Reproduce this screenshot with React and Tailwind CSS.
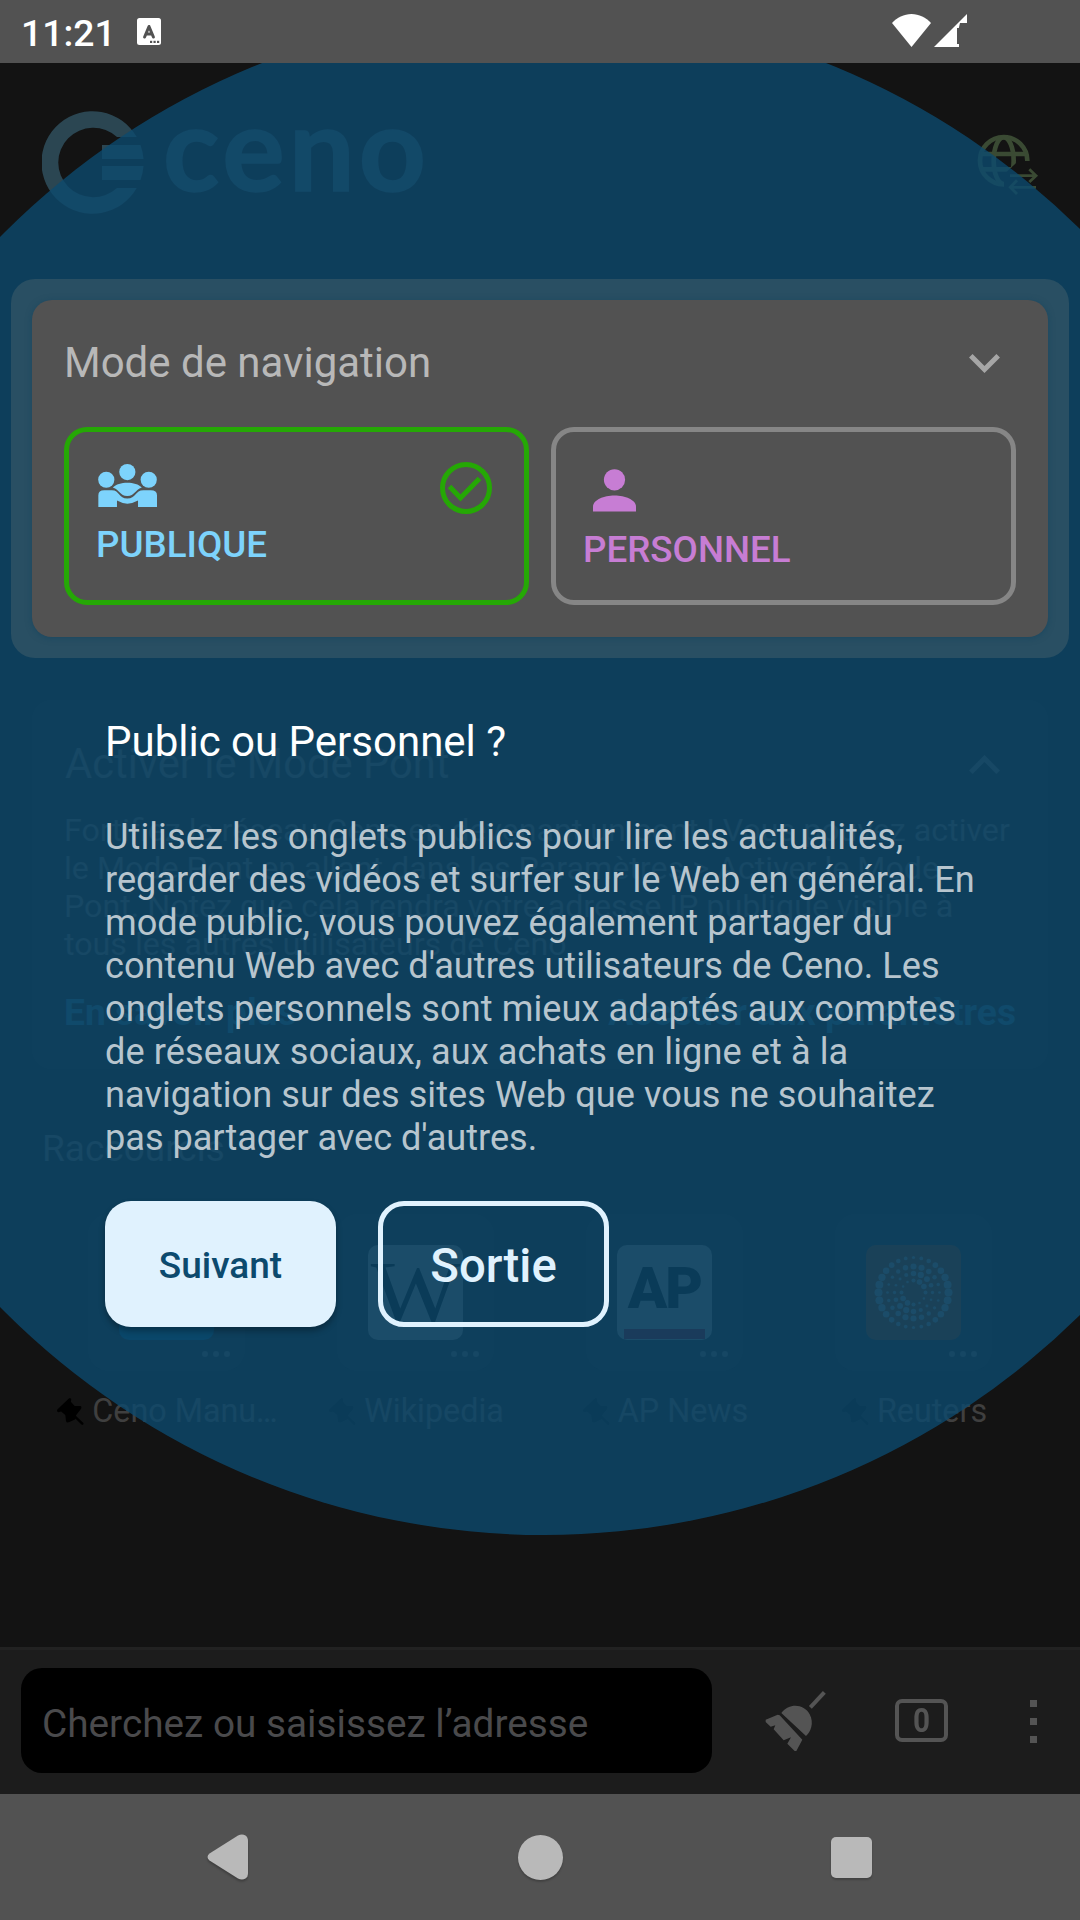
import React from 'react';

function StatusBar() {
  return (
    <header className="relative z-20 flex h-[63px] items-start bg-[#525252] text-white">
      <span className="ml-[21px] mt-[11px] w-[94px] text-[37.3px] leading-[44px] font-medium">11:21</span>
      <svg className="ml-[22px] mt-[18px] h-[27px] w-[24px]" viewBox="0 0 24 27">
        <rect width="24" height="27" rx="2.5" fill="#fff" />
        <path d="M7.6 19 L12 8.5 L16.4 19 M9.3 16 H14.7" fill="none" stroke="#525252" strokeWidth="3" strokeLinecap="round" strokeLinejoin="round" />
        <g fill="#525252">
          <rect x="13" y="22.8" width="2.2" height="2.2" />
          <rect x="16.5" y="22.8" width="2.2" height="2.2" />
          <rect x="20" y="22.8" width="2.2" height="2.2" />
        </g>
      </svg>
      <svg className="ml-auto mr-[3px] mt-[14px] h-[33px] w-[39px]" viewBox="0 0 39 33">
        <path d="M0 9 C5 3.5 12 0 19.5 0 S34 3.5 39 9 L19.5 33Z" fill="#fff" />
      </svg>
      <svg className="mr-[113px] mt-[14px] h-[33px] w-[33px]" viewBox="0 0 33 33">
        <path d="M0 33 L33 0 V9 H26 L24.8 14 H23 V30 H25 V33Z" fill="#fff" />
      </svg>
    </header>
  );
}

function BrandRow() {
  return (
    <div className="flex h-[216px] items-start px-[42px] text-[#2b4652]">
      <svg className="mt-[48px] h-[103px] w-[102px]" viewBox="0 0 102 103" fill="currentColor">
        <path d="M94.7 26 A51 51.3 0 1 0 94.7 77 H75 A35 34.7 0 1 1 75 26Z" />
        <path d="M60 34 H98.5 Q101 41 101.5 48 H60Z M60 55 H101.5 Q101 62 98.5 69 H60Z" />
      </svg>
      <span className="ml-[19px] mt-[33px] font-[Lato] text-[117px] leading-[100px] font-bold tracking-[4px] [-webkit-text-stroke:1.5px_#2b4652]">ceno</span>
      <svg className="ml-auto mr-[-1px] mt-[70px] h-[62px] w-[63px] text-[#3a4a33]" viewBox="20 25 189 186" fill="none" stroke="currentColor">
        <defs>
          <clipPath id="globeCut">
            <path d="M0 0 H184 V109 H146 L135 120 L104 148 V200 H0Z" />
          </clipPath>
        </defs>
        <g clipPath="url(#globeCut)" strokeWidth="14">
          <circle cx="103" cy="108" r="71" />
          <ellipse cx="103" cy="108" rx="30" ry="70" />
          <path d="M34 88 H172 M34 134 H172" />
        </g>
        <path d="M122 153 H200 M180 134 L200 153 L180 172 M200 188 H124 M143 167 L123 188 L143 208" strokeWidth="8.5" />
      </svg>
    </div>
  );
}

function Chevron({ up }) {
  return (
    <svg className="mr-[16px] h-[19px] w-[31px]" viewBox="0 0 31 19" fill="none" stroke="currentColor" strokeWidth="5">
      <path d={up ? 'M1.8 17.2 L15.5 3.5 L29.2 17.2' : 'M1.8 1.8 L15.5 15.5 L29.2 1.8'} />
    </svg>
  );
}

function ModeCard() {
  return (
    <div className="relative z-10 mx-[11px] rounded-[24px] bg-[#294f63] p-[21px]">
      <section className="h-[337px] rounded-[20px] bg-[#525252] px-[32px] pt-[38px] shadow-[0_1px_6px_rgba(14,63,92,0.5)]">
        <div className="flex h-[50px] items-center justify-between">
          <h2 className="text-[42px] leading-[50px] text-[#b8b8b8]">Mode de navigation</h2>
          <span className="text-[#a6a6a6]"><Chevron /></span>
        </div>
        <div className="mt-[39px] grid grid-cols-2 gap-[22px]">
          <div className="flex h-[178px] justify-between rounded-[23px] border-[5px] border-[#25a805] pl-[27px] pr-[32px] pt-[30px]">
            <div>
              <svg className="ml-[2px] mt-[2px] h-[43px] w-[59px]" viewBox="285 583 171 128" preserveAspectRatio="none" fill="#7dd3fc">
                <ellipse cx="370" cy="607" rx="23.5" ry="24" />
                <ellipse cx="309" cy="630" rx="23.5" ry="24" />
                <ellipse cx="432" cy="630" rx="23.5" ry="24" />
                <path d="M328 653 C345 634 395 634 412 653 C392 660 392 678 370 678 C348 678 348 660 328 653Z" />
                <path d="M286 711 V676 Q286 661 303 661 H325 C348 661 345 686 370 686 C395 686 392 661 417 661 H438 Q456 661 456 676 V711 H401 V692 Q370 710 340 692 V711Z" />
              </svg>
              <div className="mt-[16px] text-[36.75px] leading-[44px] font-medium text-[#7dd3fc]">PUBLIQUE</div>
            </div>
            <svg className="h-[52px] w-[52px]" viewBox="0 0 52 52" fill="none" stroke="#25a805" strokeWidth="5">
              <circle cx="26" cy="26" r="23.5" />
              <path d="M9.5 24.5 L20.5 36 L39.5 16.5" />
            </svg>
          </div>
          <div className="h-[178px] rounded-[23px] border-[5px] border-[#868686] pl-[27px] pt-[37px]">
            <svg className="ml-[10px] h-[43px] w-[43px]" viewBox="0 0 43 43" fill="#c77dd4">
              <circle cx="21.5" cy="10.8" r="10.6" />
              <path d="M0 42.5 V37.5 C0 31 11 26.5 21.5 26.5 S43 31 43 37.5 V42.5Z" />
            </svg>
            <div className="mt-[16px] text-[36.75px] leading-[44px] font-medium text-[#c77dd4]">PERSONNEL</div>
          </div>
        </div>
      </section>
    </div>
  );
}

function BridgeCard() {
  return (
    <section className="mx-[32px] mt-[42px] h-[369px] rounded-[20px] bg-[#181818] px-[32px] pt-[39px] text-[#404040]">
      <div className="flex h-[50px] items-center justify-between">
        <h2 className="ml-px text-[41.7px] leading-[50px]">Activer le Mode Pont</h2>
        <Chevron up />
      </div>
      <p className="mt-[22px] text-[32.2px] leading-[38px] whitespace-nowrap">
        <span className="block">Fortifiez le réseau Ceno en devenant un pont ! Vous pouvez activer</span>
        <span className="block">le Mode Pont en allant dans les Paramètres &gt; Activer le Mode</span>
        <span className="block">Pont. Notez que cela rendra votre adresse IP publique visible à</span>
        <span className="block">tous les autres utilisateurs de Ceno.</span>
      </p>
      <div className="mt-[27px] flex justify-between text-[37.2px] leading-[44px] font-bold text-[#204a62]">
        <span>En savoir plus</span>
        <span>Accéder aux paramètres</span>
      </div>
    </section>
  );
}

/* Rings of dots from the centre outwards: ring radius, dot radius, dot count */
const rings = [
  [12, 2, 12], [19, 2.2, 16], [26, 2.2, 20], [35, 3, 28],
];

function ReutersDots() {
  return (
    <svg className="h-full w-full" viewBox="-47.5 -47.5 95 95" fill="#565656">
      {rings.map(([radius, dot, count], r) =>
        Array.from({ length: count }, (_, i) => {
          const a = (i / count) * Math.PI * 2;
          const swell = r === 3 ? 1.6 + 2.4 * Math.abs(Math.cos(a)) ** 1.5 : dot + 0.9 * Math.cos(2 * (a + 0.8 + r * 0.3));
          return <circle key={`${r}-${i}`} cx={radius * Math.cos(a)} cy={radius * Math.sin(a)} r={swell} />;
        })
      )}
    </svg>
  );
}

function Pin() {
  return (
    <svg className="mr-[8px] h-[27px] w-[27px]" viewBox="170 677 78 80" preserveAspectRatio="none" fill="#000">
      <path d="M205 678 Q212 676 211 683 L210 688 L221 701 H238 Q243 704 238 711 L225 728 Q226 740 217 743 L206 748 Q198 752 196 745 L194 727 L182 717 L174 719 Q168 717 171 711Z" />
      <path d="M218 728 L243 753" stroke="#000" strokeWidth="7" strokeLinecap="round" />
    </svg>
  );
}

function Shortcut({ label, tone, children }) {
  return (
    <div className="flex flex-col items-center">
      <div className="flex h-[157px] w-[157px] flex-col rounded-[21px] bg-[#171717] pl-[31px] pt-[31px] shadow-[0_15px_4px_rgba(0,0,0,0.16)]">
        <div className={`h-[95px] w-[95px] rounded-[10px] ${tone}`}>{children}</div>
        <div className="mt-[11px] ml-[83px] flex gap-[5px]">
          <i className="h-[6px] w-[6px] rounded-full bg-[#3d3d3d]" />
          <i className="h-[6px] w-[6px] rounded-full bg-[#3d3d3d]" />
          <i className="h-[6px] w-[6px] rounded-full bg-[#3d3d3d]" />
        </div>
      </div>
      <div className="mt-[21px] ml-[2px] flex items-center whitespace-nowrap text-[32.3px] leading-[38px] text-[#3f3f3f]">
        <Pin />
        {label}
      </div>
    </div>
  );
}

function Shortcuts() {
  return (
    <section className="mt-[57px] h-[521px]">
      <h3 className="ml-[42px] text-[37px] leading-[45px] text-[#404040]">Raccourcis</h3>
      <div className="mx-[42px] mt-[43px] grid grid-cols-4">
        <Shortcut label="Ceno Manu…" tone="bg-[#003c5c]" />
        <Shortcut label="Wikipedia" tone="bg-[#565656]">
          <div className="origin-center scale-x-108 text-center font-['Liberation_Serif'] text-[88px] leading-[95px] text-black">W</div>
        </Shortcut>
        <Shortcut label="AP News" tone="bg-[#565656]">
          <div className="h-[84px] text-center text-[58px] leading-[86px] font-black tracking-[-2px] text-black">AP</div>
          <div className="mx-[7px] h-[10px] bg-[#520410]" />
        </Shortcut>
        <Shortcut label="Reuters" tone="bg-[#522200]">
          <ReutersDots />
        </Shortcut>
      </div>
    </section>
  );
}

function Toolbar() {
  return (
    <div className="flex h-[147px] items-start border-t-[3px] border-[#222222] bg-[#1c1c1c] pl-[21px] pt-[18px] text-[#545454]">
      <div className="h-[105px] w-[691px] rounded-[21px] bg-black pl-[21px] text-[38.75px] leading-[111px] text-[#4a4a4c]">
        Cherchez ou saisissez l’adresse
      </div>
      <svg className="ml-[49px] mt-[17px] h-[72px] w-[72px]" viewBox="0 0 216 216" fill="currentColor">
        <path d="M148 67 L190 22" stroke="currentColor" strokeWidth="12" />
        <path d="M61 84 C86 52 130 58 146 88 C160 114 149 142 135 153Z" />
        <path d="M14 104 L50 89 L56 91 L124 164 L106 198 H101 L79 176 L90 157 L68 166 L38 133 L43 121 L29 125 L14 111Z" />
      </svg>
      <div className="ml-[62px] mt-[31px] flex h-[43px] w-[53px] items-center justify-center rounded-[7px] border-4 border-[#545454] text-[33px] leading-none font-bold">
        <span className="scale-x-90">0</span>
      </div>
      <div className="ml-[82px] mt-[32px] flex flex-col gap-[11px]">
        <i className="h-[7px] w-[7px] bg-[#545454]" />
        <i className="h-[7px] w-[7px] bg-[#545454]" />
        <i className="h-[7px] w-[7px] bg-[#545454]" />
      </div>
    </div>
  );
}

function NavBar() {
  return (
    <nav className="flex h-[126px] items-center bg-[#525252] text-[#b9b9b9]">
      <svg className="ml-[207px] h-[46px] w-[41px] drop-shadow-[0_2px_1px_rgba(0,0,0,0.25)]" viewBox="0 0 41 46" fill="currentColor">
        <path d="M31 1.5 Q35 -0.5 38.5 1.5 Q41 3 41 7 V39 Q41 43 38.5 44.5 Q35 46.5 31 44.5 L2.5 26.5 Q-1.5 23 2.5 19.5Z" />
      </svg>
      <i className="ml-[270px] h-[45px] w-[45px] rounded-full bg-[#b9b9b9] shadow-[0_2px_2px_rgba(0,0,0,0.2)]" />
      <i className="ml-[268px] h-[41px] w-[41px] rounded-[5px] bg-[#b9b9b9] shadow-[0_2px_2px_rgba(0,0,0,0.2)]" />
    </nav>
  );
}

function Prompt() {
  return (
    <div className="absolute top-[717px] left-[105px] z-20">
      <h1 className="text-[42px] leading-[50px] text-white">Public ou Personnel ?</h1>
      <p className="mt-[48px] text-[36.15px] leading-[43px] whitespace-nowrap text-[#b7c5ce]">
        <span className="block tracking-[0.07px]">Utilisez les onglets publics pour lire les actualités,</span>
        <span className="block tracking-[-0.02px]">regarder des vidéos et surfer sur le Web en général. En</span>
        <span className="block">mode public, vous pouvez également partager du</span>
        <span className="block tracking-[0.02px]">contenu Web avec d'autres utilisateurs de Ceno. Les</span>
        <span className="block tracking-[0.08px]">onglets personnels sont mieux adaptés aux comptes</span>
        <span className="block tracking-[0.08px]">de réseaux sociaux, aux achats en ligne et à la</span>
        <span className="block tracking-[0.05px]">navigation sur des sites Web que vous ne souhaitez</span>
        <span className="block tracking-[-0.03px]">pas partager avec d'autres.</span>
      </p>
      <div className="mt-[42px] flex gap-[42px]">
        <button className="h-[126px] w-[231px] rounded-[26px] bg-[#e0f2fe] pt-[3px] text-[37px] leading-none font-medium text-[#0c4a6e] shadow-[0_4px_6px_rgba(0,0,0,0.3)]">Suivant</button>
        <button className="h-[126px] w-[231px] rounded-[26px] border-[5px] border-[#e0f2fe] pt-[6px] text-[47.3px] leading-none font-medium text-[#e0f2fe]">Sortie</button>
      </div>
    </div>
  );
}

export default function App() {
  return (
    <div className="relative flex h-[1920px] w-[1080px] flex-col overflow-hidden bg-[#131313] font-[Roboto,sans-serif]">
      <StatusBar />
      <BrandRow />
      <ModeCard />
      <BridgeCard />
      <Shortcuts />
      <Toolbar />
      <NavBar />
      <div className="absolute top-[8.5px] left-[-219px] z-[5] h-[1526px] w-[1526px] rounded-full bg-[#0c4a6ecc]" />
      <Prompt />
    </div>
  );
}
